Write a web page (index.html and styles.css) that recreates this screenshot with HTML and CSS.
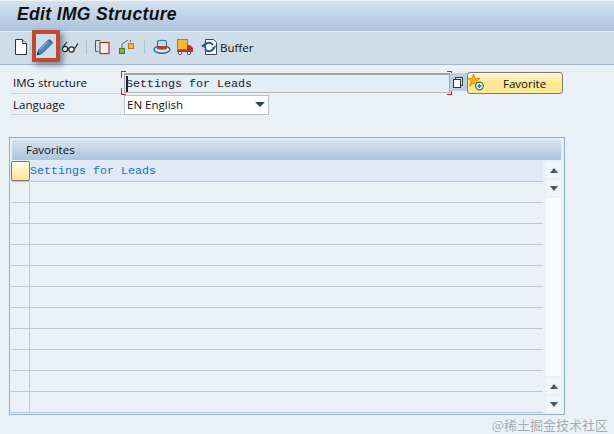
FILE: index.html
```html
<!DOCTYPE html>
<html lang="en">
<head>
<meta charset="utf-8">
<title>Edit IMG Structure</title>
<link rel="stylesheet" href="styles.css">
</head>
<body>
<header class="titlebar"><h1>Edit IMG Structure</h1></header>
<nav class="toolbar">
  <span class="tool tool-first"><svg width="14" height="18" viewBox="0 0 14 18"><path d="M1.500 1.500h7l4 4v11h-11z" fill="#fff" stroke="#333"/><path d="M8.500 1.500v4h4" fill="#ddd" stroke="#333"/></svg></span>
  <span class="tool tool-pen"><svg width="18" height="18" viewBox="0 0 18 18"><path d="M1 17l1.500-5L12.500 2l3.500 3.500-10 10z" fill="#4a86b8" stroke="#2f668f"/><path d="M12.500 2l1-1 3.500 3.500-1 1z" fill="#2b5a85"/><path d="M3.500 12l8.500-8.500" stroke="#9cc4e0" fill="none"/><path d="M1 17l.7-2.600 1.900 1.900z" fill="#123"/></svg></span>
  <span class="tool tool-glasses"><svg width="18" height="14" viewBox="0 0 18 14"><circle cx="4" cy="9" r="2.700" fill="#fff" stroke="#222" stroke-width="1.200"/><circle cx="10.500" cy="9.500" r="2.700" fill="#fff" stroke="#222" stroke-width="1.200"/><path d="M6.500 8l1.500.5M1.500 7.500L6 2M13 8.500c2 0 2-3 4-5" fill="none" stroke="#222" stroke-width="1.100"/></svg></span>
  <i class="sep sep-a"></i>
  <span class="tool tool-copy"><svg width="16" height="16" viewBox="0 0 16 16"><path d="M5.500 1.500h-5v11h3" fill="none" stroke="#555"/><rect x="5" y="3.500" width="9" height="11" fill="#f2f2f2" stroke="#b5301c" stroke-width="1.200"/></svg></span>
  <span class="tool tool-tree"><svg width="18" height="18" viewBox="0 0 18 18"><path d="M4 10V6l6-4" fill="none" stroke="#666"/><path d="M12 2l1 1-1 1" fill="none" stroke="#666"/><rect x="1.500" y="10.500" width="5" height="5" fill="#7cb547" stroke="#3f7a25"/><rect x="10.500" y="5.500" width="5" height="5" fill="#f6b93b" stroke="#c9701a"/></svg></span>
  <i class="sep sep-b"></i>
  <span class="tool tool-hat"><svg width="18" height="16" viewBox="0 0 18 16"><ellipse cx="9" cy="10.500" rx="8" ry="3.800" fill="#d5e8f5" stroke="#1e6a9a" stroke-width="1.400"/><path d="M4.500 8.500V2q4.500-1.600 9 0v6.500z" fill="#bcdcf2" stroke="#1e6a9a"/><path d="M4 7h10v3q-5 1.500-10 0z" fill="#c0392b"/></svg></span>
  <span class="tool tool-truck"><svg width="16" height="17" viewBox="0 0 16 17"><rect x="0.500" y="0.500" width="10" height="10" fill="#f7b733" stroke="#c9701a"/><path d="M0 11h10V6h3l3 3v4H0z" fill="#b5352a"/><circle cx="3" cy="14" r="1.700" fill="#fff" stroke="#555"/><circle cx="12" cy="14" r="1.700" fill="#fff" stroke="#555"/></svg></span>
  <span class="tool tool-buffer"><svg width="18" height="18" viewBox="0 0 18 18"><path d="M4.500 1.500h8l3 3v12h-11z" fill="#fff" stroke="#444"/><path d="M3 9a5 5 0 0 1 9-2M13 9a5 5 0 0 1-9 2" fill="none" stroke="#1b5fa8" stroke-width="2"/><path d="M0 8l4-3v5zM14 11l-3-1 4-3z" fill="#1b5fa8"/></svg><span class="tool-label">Buffer</span></span>
  <span class="highlight"></span>
</nav>
<main class="content">
  <div class="form-row">
    <label class="field-label">IMG structure</label>
    <div class="input-active">
      <span class="corner tl"></span><span class="corner tr"></span><span class="corner bl"></span><span class="corner br"></span>
      <span class="caret"></span><span class="mono">Settings for Leads</span>
    </div>
    <span class="f4"><i></i></span>
    <button class="fav-btn" type="button"><svg class="fav-icon" width="17" height="17" viewBox="0 0 17 17"><path d="M5.500 0l1.600 4.500H12L8 7.500l1.500 4.800-4-3-4 3L3 7.500 0 4.500h4z" fill="#fbb417" stroke="#e0701a" stroke-width=".7"/><circle cx="11.500" cy="12" r="3.800" fill="#fff" stroke="#2f7d5a" stroke-width="1.300"/><path d="M9.500 12h4M11.500 10v4" stroke="#2f7d5a" stroke-width="1.500"/></svg>Favorite</button>
  </div>
  <div class="form-row form-row-lang">
    <label class="field-label">Language</label>
    <div class="select">EN English<i class="select-arrow"></i></div>
  </div>
  <section class="table">
    <div class="table-head">Favorites</div>
    <div class="table-body">
      <div class="row row-first"><span class="sel sel-on"></span><span class="cell mono">Settings for Leads</span></div>
      <div class="row"><span class="sel"></span></div>
      <div class="row"><span class="sel"></span></div>
      <div class="row"><span class="sel"></span></div>
      <div class="row"><span class="sel"></span></div>
      <div class="row"><span class="sel"></span></div>
      <div class="row"><span class="sel"></span></div>
      <div class="row"><span class="sel"></span></div>
      <div class="row"><span class="sel"></span></div>
      <div class="row"><span class="sel"></span></div>
      <div class="row"><span class="sel"></span></div>
      <div class="row"><span class="sel"></span></div>
      <div class="scrollbar">
        <span class="sb-btn"><i class="up"></i></span>
        <span class="sb-btn"><i class="down"></i></span>
        <span class="sb-track"></span>
        <span class="sb-btn"><i class="up"></i></span>
        <span class="sb-btn"><i class="down"></i></span>
      </div>
    </div>
  </section>
</main>
<div class="watermark">@稀土掘金技术社区</div>
</body>
</html>
```
FILE: styles.css
```css
* { box-sizing: border-box; }
html, body { margin: 0; height: 100%; }
body {
  width: 614px; height: 434px; overflow: hidden; position: relative;
  background: #e9f0f6;
  font-family: "Open Sans", "Liberation Sans", sans-serif;
  font-size: 11.500px; color: #111;
}
.titlebar {
  height: 32px;
  border-top: 1px solid #eef3f8;
  border-bottom: 1px solid #e6eef5;
  background: linear-gradient(#d4e2ef, #acc3db);
  padding-left: 17px;
}
.titlebar h1 {
  margin: 0;
  font: italic 700 17.500px/26px "Liberation Sans", sans-serif;
  letter-spacing: .35px;
  color: #111;
}
.toolbar {
  height: 33px;
  background: #cfdde8;
  border-bottom: 1px solid #a4b6ca;
  display: flex; align-items: center;
  position: relative;
  padding: 0 0 2px 14px;
}
.tool { display: flex; align-items: center; }
.tool-pen { margin-left: 8px; }
.tool-glasses { margin-left: 7px; }
.sep-a { margin-left: 7px; }
.tool-copy { margin-left: 8px; }
.tool-tree { margin-left: 7px; }
.sep-b { margin-left: 8px; }
.tool-hat { margin-left: 8px; }
.tool-truck { margin-left: 6px; }
.tool-buffer { margin-left: 8px; }
.tool-label { margin-left: 1px; color: #111; }
.sep { width: 1px; height: 14px; background: #a9c2d8; }
.highlight {
  position: absolute; left: 32px; top: -2px; width: 28px; height: 32px;
  border: 4px solid #bf4a30;
  box-shadow: 3px 3px 6px rgba(50,60,70,.55);
}
.content { padding: 8px 0 0 11px; }
.form-row { display: flex; height: 22px; align-items: flex-start; }
.form-row-lang { height: 21px; }
.field-label {
  width: 113px; height: 21px; line-height: 20px; padding-left: 2px;
  border-bottom: 1px solid #c9d4e0; color: #111;
}
.form-row-lang .field-label { height: 20px; }
.mono { font: 11.670px/18px "Liberation Mono", monospace; }
.input-active {
  width: 326px; height: 20px;
  background: #e2edf6;
  border: 1px solid #a2a6a9; border-top-width: 2px; border-bottom-color: #b5b9bb;
  padding-left: 1px; position: relative; color: #222;
  display: flex; align-items: center;
}
.corner { position: absolute; width: 5px; height: 7px; border: 0 solid #f01010; }
.tl { left: -4px; top: -4px; border-width: 1px 0 0 1px; }
.tr { right: -3px; top: -4px; border-width: 1px 1px 0 0; }
.bl { left: -4px; bottom: -3px; border-width: 0 0 1px 1px; }
.br { right: -3px; bottom: -3px; border-width: 0 1px 1px 0; }
.caret { width: 2px; height: 16px; background: #222; margin-right: -2px; position: relative; }
.f4 {
  width: 17px; height: 18px; background: #bfcfe2; position: relative; flex: none;
}
.f4 i {
  position: absolute; left: 3px; top: 6px; width: 8px; height: 9px;
  background: #fff; border: 1px solid #333; box-shadow: 2px -2px 0 -1px #cfdae6, 2px -2px 0 0 #444;
}
.fav-btn {
  width: 96px; height: 22px; padding: 0 0 0 35px; margin: -1px 0 0; text-align: left;
  background: linear-gradient(#fff8d8, #ffe68f 55%, #ffe99c);
  border: 1px solid #7a7a70; border-radius: 3px;
  font: 11.500px/19px "Open Sans", "Liberation Sans", sans-serif; color: #111;
  position: relative;
}
.fav-icon { position: absolute; left: 0; top: 1px; }
.select {
  width: 145px; height: 20px; background: #fff;
  border: 1px solid #b9c2cc; padding-left: 2px; line-height: 18px; position: relative;
}
.select-arrow {
  position: absolute; right: 3px; top: 6px;
  border: 5px solid transparent; border-top: 5px solid #24456c; border-bottom: 0;
}
.table {
  width: 556px; height: 278px; margin: 21px 0 0 -2px;
  border: 1px solid #8fadcf; padding: 1px;
}
.table-head {
  height: 22px; line-height: 19px; padding-left: 14px;
  margin-right: 1px; color: #111;
  background: linear-gradient(#d6e4f0, #adc4dc);
  border: 1px solid #e4ecf4;
}
.table-body { position: relative; height: 252px; }
.row { height: 21px; display: flex; border-bottom: 1px solid #bcc8d6; }
.row-first { background: #dfeaf4; }
.sel { width: 19px; flex: none; border-right: 1px solid #bcc8d6; }
.sel-on {
  background: linear-gradient(#fffbe6, #ffe693);
  border: 1px solid #77776c; border-radius: 2px; height: 20px;
}
.cell { color: #1a72b8; line-height: 20px; }
.scrollbar {
  position: absolute; right: -1px; top: -1px; bottom: 0; width: 21px;
  background: #e9f0f6; padding: 2px 3px 1px;
  display: flex; flex-direction: column; gap: 2px;
}
.sb-btn {
  height: 16px; flex: none; background: #f1f5fa;
  display: flex; align-items: center; justify-content: center;
}
.sb-track { flex: 1; background: #f8fafc; }
.sb-btn i { border: 4px solid transparent; }
.sb-btn .up { border-bottom: 5px solid #46596b; border-top: 0; }
.sb-btn .down { border-top: 5px solid #46596b; border-bottom: 0; }
.watermark {
  position: absolute; right: 6px; bottom: 1px;
  font: 13px/16px "Noto Sans CJK SC", sans-serif;
  color: rgba(120,125,135,.6);
}
```
